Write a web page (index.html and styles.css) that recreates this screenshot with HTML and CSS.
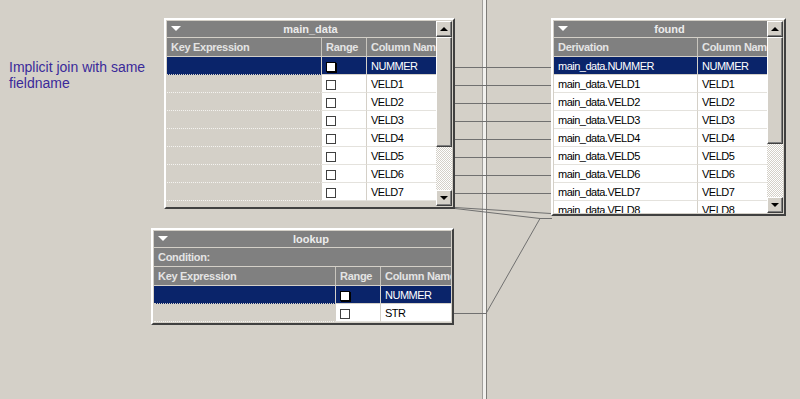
FILE: index.html
```html
<!DOCTYPE html>
<html lang="en">
<head>
    <meta charset="UTF-8">
    <title>Join diagram</title>
    <link rel="stylesheet" href="styles.css">
</head>
<body>
    <div class="desk">
        <p class="note">Implicit join with same<br>fieldname</p>
        <div class="divider"></div>

        <!-- join lines between the tables -->
        <svg class="links" width="800" height="399" viewBox="0 0 800 399">
            <g class="flat">
                <line x1="455" y1="67.5" x2="551" y2="67.5"/>
                <line x1="455" y1="85.5" x2="551" y2="85.5"/>
                <line x1="455" y1="103.5" x2="551" y2="103.5"/>
                <line x1="455" y1="121.5" x2="551" y2="121.5"/>
                <line x1="455" y1="139.5" x2="551" y2="139.5"/>
                <line x1="455" y1="157.5" x2="551" y2="157.5"/>
                <line x1="455" y1="175.5" x2="551" y2="175.5"/>
                <line x1="455" y1="193.5" x2="551" y2="193.5"/>
                <line x1="454" y1="313.5" x2="486" y2="313.5"/>
                <line x1="540" y1="218.5" x2="552" y2="218.5"/>
            </g>
            <g class="slant">
                <line x1="455" y1="207.5" x2="551" y2="213.5"/>
                <line x1="455" y1="208.5" x2="540" y2="218.5"/>
                <line x1="486" y1="313.5" x2="540" y2="218.5"/>
            </g>
        </svg>

        <div class="win win-main">
            <div class="pane">
                <div class="titlebar">main_data</div>
                <div class="grid head">
                    <div class="hcell">Key Expression</div>
                    <div class="hcell">Range</div>
                    <div class="hcell">Column Name</div>
                </div>
                <div class="grid row sel">
                    <div class="cell key"></div>
                    <div class="cell"><span class="check"></span></div>
                    <div class="cell">NUMMER</div>
                </div>
                <div class="grid row">
                    <div class="cell key"></div>
                    <div class="cell"><span class="check"></span></div>
                    <div class="cell">VELD1</div>
                </div>
                <div class="grid row">
                    <div class="cell key"></div>
                    <div class="cell"><span class="check"></span></div>
                    <div class="cell">VELD2</div>
                </div>
                <div class="grid row">
                    <div class="cell key"></div>
                    <div class="cell"><span class="check"></span></div>
                    <div class="cell">VELD3</div>
                </div>
                <div class="grid row">
                    <div class="cell key"></div>
                    <div class="cell"><span class="check"></span></div>
                    <div class="cell">VELD4</div>
                </div>
                <div class="grid row">
                    <div class="cell key"></div>
                    <div class="cell"><span class="check"></span></div>
                    <div class="cell">VELD5</div>
                </div>
                <div class="grid row">
                    <div class="cell key"></div>
                    <div class="cell"><span class="check"></span></div>
                    <div class="cell">VELD6</div>
                </div>
                <div class="grid row">
                    <div class="cell key"></div>
                    <div class="cell"><span class="check"></span></div>
                    <div class="cell">VELD7</div>
                </div>
                <div class="vscroll">
                    <div class="sbtn"><span class="arrow up"></span></div>
                    <div class="thumb"></div>
                    <div class="sbtn"><span class="arrow down"></span></div>
                </div>
            </div>
        </div>

        <div class="win win-lookup">
            <div class="pane">
                <div class="titlebar">lookup</div>
                <div class="condition">Condition:</div>
                <div class="grid head">
                    <div class="hcell">Key Expression</div>
                    <div class="hcell">Range</div>
                    <div class="hcell">Column Name</div>
                </div>
                <div class="grid row sel">
                    <div class="cell key"></div>
                    <div class="cell"><span class="check"></span></div>
                    <div class="cell">NUMMER</div>
                </div>
                <div class="grid row">
                    <div class="cell key"></div>
                    <div class="cell"><span class="check"></span></div>
                    <div class="cell">STR</div>
                </div>
            </div>
        </div>

        <div class="win win-found">
            <div class="pane">
                <div class="titlebar">found</div>
                <div class="grid head">
                    <div class="hcell">Derivation</div>
                    <div class="hcell">Column Name</div>
                </div>
                <div class="grid row sel">
                    <div class="cell">main_data.NUMMER</div>
                    <div class="cell">NUMMER</div>
                </div>
                <div class="grid row">
                    <div class="cell">main_data.VELD1</div>
                    <div class="cell">VELD1</div>
                </div>
                <div class="grid row">
                    <div class="cell">main_data.VELD2</div>
                    <div class="cell">VELD2</div>
                </div>
                <div class="grid row">
                    <div class="cell">main_data.VELD3</div>
                    <div class="cell">VELD3</div>
                </div>
                <div class="grid row">
                    <div class="cell">main_data.VELD4</div>
                    <div class="cell">VELD4</div>
                </div>
                <div class="grid row">
                    <div class="cell">main_data.VELD5</div>
                    <div class="cell">VELD5</div>
                </div>
                <div class="grid row">
                    <div class="cell">main_data.VELD6</div>
                    <div class="cell">VELD6</div>
                </div>
                <div class="grid row">
                    <div class="cell">main_data.VELD7</div>
                    <div class="cell">VELD7</div>
                </div>
                <div class="grid row">
                    <div class="cell">main_data.VELD8</div>
                    <div class="cell">VELD8</div>
                </div>
                <div class="vscroll">
                    <div class="sbtn"><span class="arrow up"></span></div>
                    <div class="thumb short"></div>
                    <div class="sbtn"><span class="arrow down"></span></div>
                </div>
            </div>
        </div>
    </div>
</body>
</html>
```

FILE: styles.css
```css
body {
    margin: 0;
    background: #d4d0c8;
    font-family: "Liberation Sans", Arial, sans-serif;
    overflow: hidden;
}
.desk {
    position: relative;
    width: 800px;
    height: 399px;
}
.note {
    position: absolute;
    left: 9px;
    top: 59px;
    margin: 0;
    font-size: 14px;
    line-height: 16px;
    color: #3a2a9a;
}
.divider {
    position: absolute;
    left: 482px;
    top: 0;
    width: 3px;
    height: 399px;
    border-left: 1px solid #a09e9a;
    border-right: 1px solid #7e7c78;
    background: #f2f1ee;
}
.links {
    position: absolute;
    left: 0;
    top: 0;
}
.links line {
    stroke: #707070;
    stroke-width: 1;
}
.links .flat line {
    shape-rendering: crispEdges;
}

/* table windows */
.win {
    position: absolute;
    box-sizing: border-box;
    border: 2px solid;
    border-color: #ffffff #404040 #404040 #ffffff;
    padding: 1px;
    background: #d4d0c8;
}
.win-main { left: 164px; top: 18px; width: 291px; height: 191px; }
.win-lookup { left: 151px; top: 228px; width: 303px; height: 97px; }
.win-found { left: 551px; top: 18px; width: 235px; height: 198px; }

.pane {
    position: relative;
    height: 100%;
    overflow: hidden;
    background: #d4d0c8;
    font-size: 11px;
    letter-spacing: -0.5px;
}
.titlebar {
    position: relative;
    height: 16px;
    margin-bottom: 1px;
    background: #808080;
    color: #ececec;
    font-weight: bold;
    letter-spacing: 0;
    line-height: 16px;
    text-align: center;
    padding-left: 2px;
}
.titlebar::before {
    content: "";
    position: absolute;
    left: 4px;
    top: 5px;
    border-left: 5px solid transparent;
    border-right: 5px solid transparent;
    border-top: 5px solid #ffffff;
}
.win-lookup .titlebar { padding-left: 17px; }
.condition {
    height: 18px;
    margin-bottom: 1px;
    padding-left: 4px;
    background: #808080;
    color: #e4e4e4;
    font-weight: bold;
    letter-spacing: -0.3px;
    line-height: 18px;
}

.grid { display: grid; }
.win-main .grid { grid-template-columns: 155px 45px 1fr; }
.win-lookup .grid { grid-template-columns: 182px 45px 1fr; }
.win-found .grid { grid-template-columns: 144px 1fr; }

.head {
    height: 18px;
    margin-bottom: 1px;
}
.hcell {
    box-sizing: border-box;
    padding-left: 4px;
    background: #808080;
    border-right: 1px solid #c8c5be;
    color: #e4e4e4;
    font-weight: bold;
    letter-spacing: -0.3px;
    line-height: 18px;
    white-space: nowrap;
    overflow: hidden;
}
.hcell:last-child { border-right: none; }

.row { height: 18px; }
.cell {
    box-sizing: border-box;
    display: flex;
    align-items: center;
    padding-left: 4px;
    background: #ffffff;
    border-right: 1px solid #d4d0c8;
    border-bottom: 1px solid #e4e2dd;
    color: #000000;
    white-space: nowrap;
    overflow: hidden;
}
.cell:last-child { border-right: none; }
.cell.key {
    background: #d4d0c8;
    border-bottom: 1px dotted #f4f3f0;
}
.row.sel .cell {
    background: #0a246a;
    color: #ffffff;
    border-bottom-color: #d4d0c8;
}
.check {
    box-sizing: border-box;
    width: 10px;
    height: 10px;
    margin-top: 2px;
    border: 1px solid #404040;
    background: #ffffff;
}
.row.sel .check {
    border-color: #000000;
    box-shadow: 1px 1px 0 #000000;
}

/* scrollbar */
.vscroll {
    position: absolute;
    top: 0;
    right: 0;
    bottom: 0;
    width: 16px;
    display: flex;
    flex-direction: column;
    background-color: #ffffff;
    background-image: repeating-conic-gradient(#d4d0c8 0 25%, #ffffff 0 50%);
    background-size: 2px 2px;
}
.sbtn, .thumb {
    box-sizing: border-box;
    border: 1px solid;
    border-color: #ffffff #404040 #404040 #ffffff;
    box-shadow: inset -1px -1px #808080;
    background: #d4d0c8;
}
.sbtn {
    height: 16px;
    display: flex;
    align-items: center;
    justify-content: center;
}
.sbtn:last-child { margin-top: auto; }
.thumb { height: 110px; }
.thumb.short { height: 107px; }
.arrow {
    border-left: 4px solid transparent;
    border-right: 4px solid transparent;
}
.arrow.up { border-bottom: 4px solid #000000; margin-bottom: 1px; }
.arrow.down { border-top: 4px solid #000000; }
```
